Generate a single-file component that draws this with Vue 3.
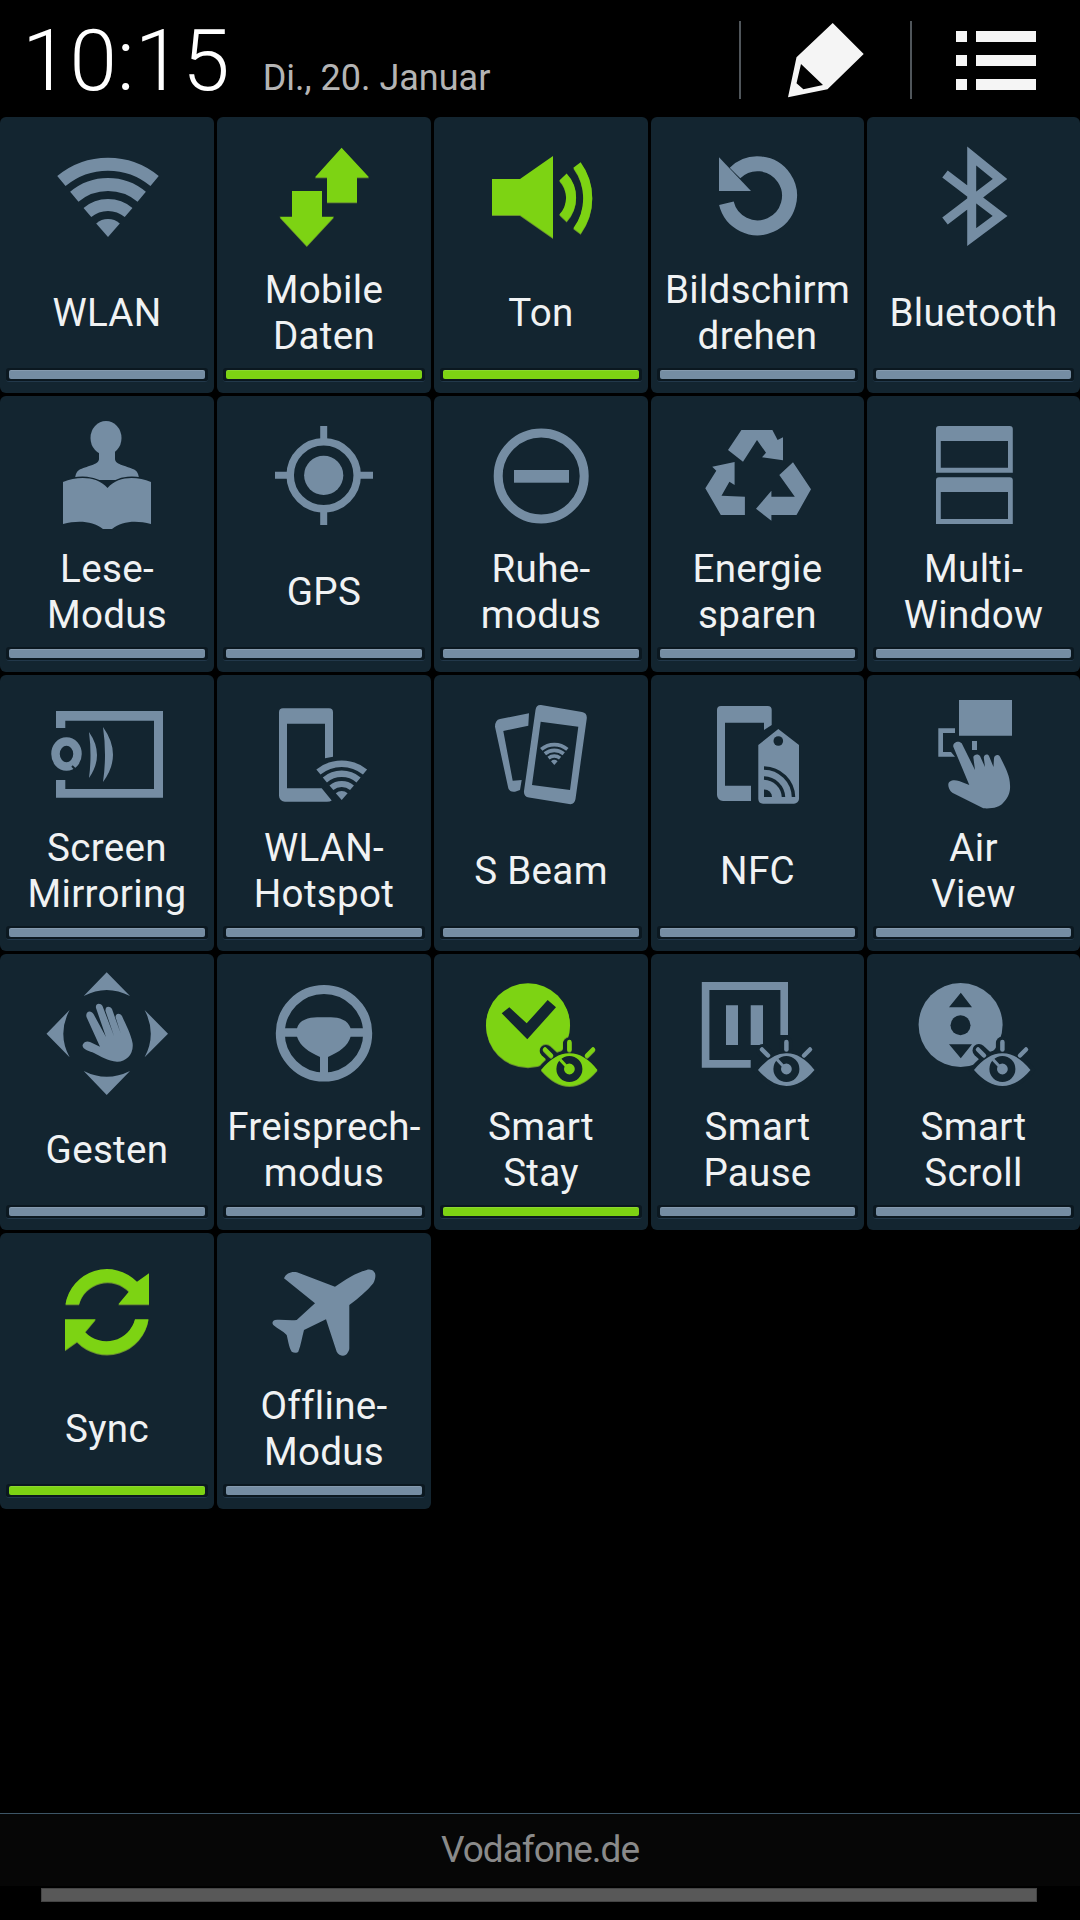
<script setup>
const BG = '#132530'

const wifi = `<path d="M108 120L96.2 106.4A18 18 0 0 1 119.8 106.4Z" fill="currentColor"/><g fill="none" stroke="currentColor"><path stroke-width="13" d="M61.4 64.1A73 73 0 0 1 154.6 64.1"/><path stroke-width="13" d="M74.3 79.8A52.5 52.5 0 0 1 141.7 79.8"/><path stroke-width="12" d="M87.4 95.5A32 32 0 0 1 128.6 95.5"/></g>`

const almond = 'M107 116Q121 99 135.4 99.3Q150 99 163.5 116Q150 132 135.4 132Q121 132 107 116Z'
const eyeCut = (c) => `<g fill="none" stroke-linecap="round"><g stroke="${c}" stroke-width="13"><path d="M135.4 89V96"/><path d="M112 96.5L118 102"/></g><path fill="${c}" stroke="${c}" stroke-width="8" d="${almond}"/></g>`
const eyeBody = `<g fill="none" stroke-linecap="round" stroke="currentColor" stroke-width="4.5"><path d="M135.4 88V95.5"/><path d="M111 95.5L117 101.5"/><path d="M159 95.5L153 101.5"/></g><path fill="currentColor" d="${almond}"/><circle cx="135.4" cy="115" r="9.2" fill="none" stroke="${BG}" stroke-width="7.6"/><path d="M126 105.5L134 114" stroke="currentColor" stroke-width="3"/>`
const eye = eyeCut(BG) + eyeBody

const syncArc = 'M65.5 71.3A42 42 0 0 1 137 48.8L149 40.3V71.3H118.3L129 58.6A29.5 29.5 0 0 0 79 71.3Z'

const icons = {
  wifi,
  data: `<path fill="currentColor" d="M124.6 30.7L152 60.3H140V85.3H110V60.3H98ZM75 74H105V99.7H117L89.8 129L62.6 99.7H75Z"/>`,
  sound: `<path fill="currentColor" d="M58 62H86L119 39V121L86 98H58Z"/><g fill="none" stroke="currentColor"><path stroke-width="10" d="M129 60A30 30 0 0 1 129 101"/><path stroke-width="9" d="M143 48A56 56 0 0 1 143 114"/></g>`,
  rotate: `<path fill="none" stroke="currentColor" stroke-width="15" d="M75.4 86.3A32 32 0 1 0 84 56"/><path fill="currentColor" d="M68 40.3V74H100Z"/>`,
  bluetooth: `<path fill="none" stroke="currentColor" stroke-width="9" stroke-miterlimit="10" d="M78 57L133 99L104.7 120V39L133 62L78 104"/>`,
  reader: `<ellipse fill="currentColor" cx="106" cy="42" rx="15.5" ry="17"/><path fill="currentColor" d="M99 52V63C99 69 86 70 79 74C76 76 75 80 75 84H139C139 80 138 76 135 74C128 70 115 69 115 63V52Z"/><path fill="currentColor" stroke="${BG}" stroke-width="3" paint-order="stroke" d="M63 86C78 80 97 80 107.5 92C118 80 136 80 151 86V128C136 124 122 125 112 133H103C93 125 78 124 63 128Z"/>`,
  gps: `<circle cx="106.7" cy="79.3" r="33.5" fill="none" stroke="currentColor" stroke-width="7.5"/><circle cx="106.7" cy="79.3" r="19.6" fill="currentColor"/><path stroke="currentColor" stroke-width="7" d="M106.7 30V47M106.7 112V129M58 79.3H75M138 79.3H156"/>`,
  dnd: `<circle cx="107.2" cy="80" r="43" fill="none" stroke="currentColor" stroke-width="9"/><rect x="80" y="74" width="55" height="12.7" fill="currentColor"/>`,
  recycle: `<path fill="currentColor" d="M77 54L90.4 34H121.4L126.6 44L132 41.3V64.3L111 61.3L115 56.7L106 44L92 65.7ZM142 66.3L160 93.3L145.5 119H120.4V124.7L105 112.8L120.4 94.7V100.7H143.8L128.3 79ZM83.6 66V89L78.4 85.7L70.5 99.7L93.9 100.7V119H69.8L54.3 92.3L65.3 74.7L61.2 70.7Z"/>`,
  multi: `<path fill="currentColor" fill-rule="evenodd" d="M72 30H142.8A3 3 0 0 1 145.8 33V76.7H69V33A3 3 0 0 1 72 30ZM73.8 45V71.7H141V45ZM72 81.3H142.8A3 3 0 0 1 145.8 84.3V128H69V84.3A3 3 0 0 1 72 81.3ZM73.8 96V123H141V96Z"/>`,
  mirror: `<path fill="currentColor" d="M56 36H163V122.7H56V105H65.3V114H154V45.7H65.3V53H56Z"/><ellipse cx="66.5" cy="79" rx="11" ry="12.5" fill="none" stroke="currentColor" stroke-width="8.5"/><path stroke="${BG}" stroke-width="2" d="M72 91L77 96"/><path fill="currentColor" d="M89 57Q105 80 89 103Q92 80 89 57ZM103 52Q123 80 103 107Q107 80 103 52Z"/>`,
  hotspot: `<path fill="currentColor" d="M66 33.3H112A4 4 0 0 1 116 37.3V81.7L108 83.3V48.7H70V113.3H104.7L114.7 125.5Q113 126.7 110 126.7H68A6 6 0 0 1 62 120.7V37.3A4 4 0 0 1 66 33.3Z"/><g transform="translate(124.7 125) scale(.5) translate(-108 -120)">${wifi}</g>`,
  sbeam: `<path fill="currentColor" d="M95 38.3L66 44Q61 45 61 51.7L74.3 113.3Q76 117.5 81 116.7L86 115L87.7 105L78.7 105.7L69.3 56L94.3 50.7Z"/><path fill="currentColor" fill-rule="evenodd" d="M107 30L148 37Q153.5 38 152.7 44L141.5 124Q140.5 130 135 129L95 122.5Q89.5 121.5 90 116L101.5 35Q102.3 29.5 107 30ZM106.7 46.7L98 110L136 115L144.3 51.7Z"/><g transform="translate(120.3 90) scale(.28) translate(-108 -120)">${wifi}</g>`,
  nfc: `<path fill="currentColor" d="M70 31H116.7A4 4 0 0 1 120.7 35V50L113 55V47.7H74V110.7H100V126H72A6 6 0 0 1 66 120V35A4 4 0 0 1 70 31Z"/><path fill="currentColor" fill-rule="evenodd" d="M127.3 54L148 70V124A5 5 0 0 1 143 128.7H112A5 5 0 0 1 107.3 124V70Z"/><circle cx="127.3" cy="66" r="4.8" fill="${BG}"/><g fill="none" stroke="${BG}" stroke-width="3.5"><path d="M113 93A30 30 0 0 1 142.5 122"/><path d="M113 103A20 20 0 0 1 132.5 122"/></g><path fill="${BG}" d="M113 114.5A7.5 7.5 0 0 1 121 122H113Z"/>`,
  air: `<path fill="currentColor" d="M92 25H145V60.7H92ZM71.3 53.3H88V58H76V77H84L88 81.7H71.3ZM105 66H110V75H105Z"/><path fill="currentColor" d="M86.3 71.7L102.3 110L92 106C86 104 81 106 81.3 110C81.5 114 84 117 86.3 118.3L116.3 133.3C125 134 133 132 136 128C142 122 143.5 116 143 110C143 100 137 90 133 81.7C132 79.5 128 79 127 83L126.5 92L122 81C120.5 78.5 117 79.5 116.8 82.5L118 92L113 81C111.5 78.5 107 79 106.3 82L108 95L94.7 68.3C92 65 85.5 67 86.3 71.7Z"/>`,
  gesture: `<path fill="currentColor" d="M106.7 18.3L130 42Q106.7 30 83.7 42ZM106.7 141L83.7 117Q106.7 128.5 130 117ZM46.5 79.7L69.6 56Q57 79.7 69.6 103.3ZM168 79.7L144.6 56Q157 79.7 144.6 103.3Z"/><path fill="currentColor" d="M82.6 91C84 87 88 87 90 88L100 92.7L86.5 63C85 57 91 55.5 93.5 60L106 83L96 54C95 49 100.5 48.5 102.5 52L114 82L105.5 57C105 51.5 110 52 112 55L120.5 79L115.5 63C116 58.5 120 59 122 62C126 71 131 80 132.6 89.3C134 100 126 108 117 107.7C108 107 100 102 94 99C90 97 82 96 82.6 91Z"/>`,
  wheel: `<circle cx="107" cy="79.3" r="43.7" fill="none" stroke="currentColor" stroke-width="9"/><path fill="currentColor" d="M65 74.3H80C82 66 92 63.3 100 63.3H114C122 63.3 131 66 133.6 74.3H149V82.7H133.6C131 92 122 98 111 103V122H103V103C92 98 83 92 80 82.7H65Z"/>`,
  stay: `<mask id="stay-cut" maskUnits="userSpaceOnUse" x="0" y="0" width="214" height="150"><rect width="214" height="150" fill="#fff"/>${eyeCut('#000')}</mask><g mask="url(#stay-cut)"><circle cx="94" cy="71.3" r="42" fill="currentColor"/></g><path fill="${BG}" d="M67.7 59.3L75.3 53.3L92.7 69.3L113.7 46L122 53.3L93.3 85.3Z"/>${eyeBody}`,
  pause: `<path fill="currentColor" d="M50.8 28H137V81H129.4V36H58.4V106H99.7V113.7H50.8ZM75 51.3H87V91H75ZM99.7 51.3H112V91H99.7Z"/>${eye}`,
  scroll: `<circle cx="93.6" cy="71" r="42" fill="currentColor"/><path fill="${BG}" d="M93.8 38.7L105 53.3H82ZM82 90.3H105L93.8 104.3Z"/><circle cx="93.5" cy="71.3" r="10" fill="${BG}"/>${eye}`,
  sync: `<path fill="currentColor" d="${syncArc}"/><path fill="currentColor" transform="rotate(180 107 78.8)" d="${syncArc}"/>`,
  plane: `<path fill="currentColor" d="M158 40.3C156.5 36.5 152 36 149.7 37C138 40 128 47 118 53.7L80 39.3C75 38 69 40 67 45.3L98 70.3L79.7 87C72 88 65 86 58 87C55 88 55 91 56.3 92C61 96 66 98 69.7 102C71 107 72 115 74.7 118.7C77 120 80 120 81.3 118.7C84 112 85 104 87 97L109 86.3L119.7 118.7C122 123 128 124.5 130.5 120C132 118 132.3 116.5 132.3 115.3V72C142 65 150 58 156.3 50.3C158 47 159 43 158 40.3Z"/>`,
}

const tiles = [
  { icon: 'wifi', label: 'WLAN' },
  { icon: 'data', label: 'Mobile\nDaten', on: true },
  { icon: 'sound', label: 'Ton', on: true },
  { icon: 'rotate', label: 'Bildschirm\ndrehen' },
  { icon: 'bluetooth', label: 'Bluetooth' },
  { icon: 'reader', label: 'Lese-\nModus' },
  { icon: 'gps', label: 'GPS' },
  { icon: 'dnd', label: 'Ruhe-\nmodus' },
  { icon: 'recycle', label: 'Energie\nsparen' },
  { icon: 'multi', label: 'Multi-\nWindow' },
  { icon: 'mirror', label: 'Screen\nMirroring' },
  { icon: 'hotspot', label: 'WLAN-\nHotspot' },
  { icon: 'sbeam', label: 'S Beam' },
  { icon: 'nfc', label: 'NFC' },
  { icon: 'air', label: 'Air\nView' },
  { icon: 'gesture', label: 'Gesten' },
  { icon: 'wheel', label: 'Freisprech-\nmodus' },
  { icon: 'stay', label: 'Smart\nStay', on: true },
  { icon: 'pause', label: 'Smart\nPause' },
  { icon: 'scroll', label: 'Smart\nScroll' },
  { icon: 'sync', label: 'Sync', on: true },
  { icon: 'plane', label: 'Offline-\nModus' },
]
</script>

<template>
  <div class="screen">
    <header class="top">
      <div class="clock">
        <span class="time">10:15</span>
        <span class="date">Di., 20. Januar</span>
      </div>
      <i class="divider"></i>
      <svg class="pencil" width="76" height="75" viewBox="0 0 76 75">
        <path fill="#f5f5f5" fill-rule="evenodd" d="M0 74.3L8.5 34.3L44.7 0L75.7 31L39.5 66.3ZM13 41L8.5 60.3L15.4 66.3L35 62Z" />
      </svg>
      <i class="divider"></i>
      <svg class="menu" width="80" height="59" viewBox="0 0 80 59">
        <g fill="#f5f5f5">
          <rect width="11" height="11" />
          <rect x="20" width="60" height="11" />
          <rect y="24" width="11" height="11" />
          <rect x="20" y="24" width="60" height="11" />
          <rect y="48" width="11" height="11" />
          <rect x="20" y="48" width="60" height="11" />
        </g>
      </svg>
    </header>

    <section class="grid">
      <div v-for="t in tiles" :key="t.icon" class="tile" :class="{ on: t.on }">
        <svg class="icon" width="214" height="150" viewBox="0 0 214 150" v-html="icons[t.icon]"></svg>
        <div class="label">{{ t.label }}</div>
        <div class="groove"><div class="fill"></div></div>
      </div>
    </section>

    <footer class="foot">
      <div class="carrier">Vodafone.de</div>
      <div class="handle"><div class="handle-bar"></div></div>
    </footer>
  </div>
</template>

<style>
html, body { margin: 0; background: #000; }
</style>

<style scoped>
.screen {
  width: 1080px;
  height: 1920px;
  background: #000;
  display: flex;
  flex-direction: column;
  overflow: hidden;
  font-family: Roboto, "Liberation Sans", sans-serif;
}
.top {
  height: 114px;
  padding-top: 3px;
  display: flex;
  align-items: center;
  flex: none;
}
.clock {
  width: 739px;
  display: flex;
  align-items: baseline;
  padding: 1px 0 0 22px;
  box-sizing: border-box;
}
.time {
  font-size: 85.5px;
  font-weight: 300;
  color: #fff;
  line-height: 84px;
}
.date {
  font-size: 36px;
  margin-left: 33px;
  color: #b4b4b4;
  font-weight: 400;
}
.divider {
  width: 2px;
  height: 78px;
  background: #50565b;
  flex: none;
}
.pencil { margin: 0 46px 0 47px; flex: none; }
.menu { margin-left: 44px; flex: none; }

.grid {
  display: grid;
  grid-template-columns: 214px 214px 214px 213px 213px;
  grid-auto-rows: 276px;
  gap: 3px;
  flex: none;
}
.tile {
  background: #132530;
  border-radius: 6px;
  overflow: hidden;
  color: #758da3;
  display: flex;
  flex-direction: column;
}
.tile.on { color: #7dd313; }
.icon { display: block; flex: none; }
.tile.on .icon { filter: drop-shadow(0 1px 0 rgba(175, 230, 50, .55)); }
.label {
  height: 92px;
  flex: none;
  display: flex;
  align-items: center;
  justify-content: center;
  text-align: center;
  white-space: pre-line;
  font-size: 38.6px;
  letter-spacing: .3px;
  line-height: 46px;
  color: #f0f2f3;
}
.groove {
  margin: 9px 6px 0;
  height: 9px;
  padding: 2px 3px 2px;
  background: #0b1820;
  border-bottom: 1px solid #22384a;
  border-radius: 3px;
}
.fill {
  height: 9px;
  background: currentColor;
  border-radius: 2px;
  box-shadow: inset 0 1px 0 rgba(255, 255, 255, .12);
}

.foot {
  margin-top: auto;
  flex: none;
}
.carrier {
  height: 72px;
  border-top: 1px solid #3d5566;
  background: #060606;
  color: #8a8a8a;
  font-size: 37px;
  letter-spacing: -1px;
  line-height: 72px;
  text-align: center;
}
.handle {
  height: 34px;
  padding: 2px 43px 0 41px;
  box-sizing: border-box;
}
.handle-bar {
  height: 14px;
  background: #585858;
  box-shadow: inset 0 0 0 1px #444;
}
</style>
